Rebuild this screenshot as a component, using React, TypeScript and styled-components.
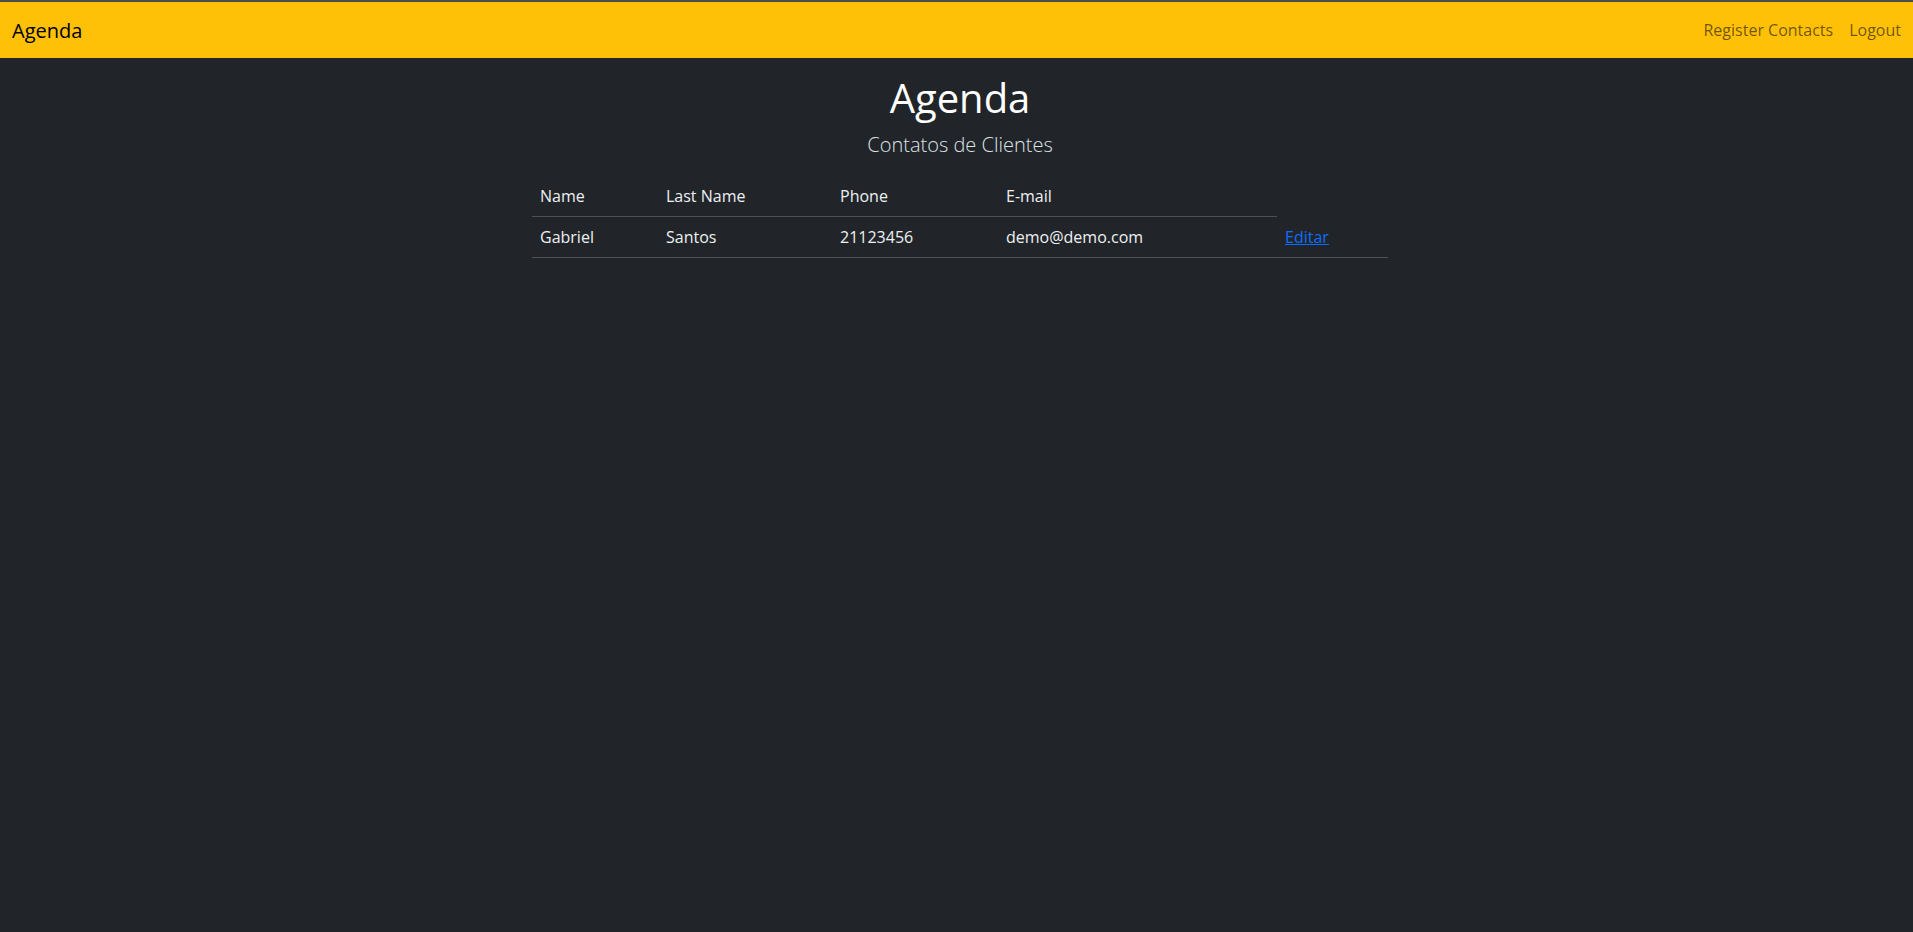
import React from "react";
import styled, { createGlobalStyle } from "styled-components";

const GlobalStyle = createGlobalStyle`
  html, body {
    margin: 0;
    padding: 0;
    background: #212529;
    font-family: "Open Sans", "Noto Sans", sans-serif;
    color: #dee2e6;
  }
  * { box-sizing: border-box; }
`;

const Page = styled.div`
  min-height: 932px;
  background: #212529;
  border-top: 2px solid #4b4b4b;
`;

const NavBar = styled.nav`
  height: 56px;
  background: #ffc107;
  display: flex;
  align-items: center;
  justify-content: space-between;
  padding: 0 12px;
`;

const Brand = styled.a`
  font-size: 20px;
  color: #000;
  text-decoration: none;
`;

const NavLinks = styled.div`
  display: flex;
  gap: 16px;
`;

const NavLink = styled.a`
  font-size: 16px;
  color: rgba(0, 0, 0, 0.58);
  text-decoration: none;
`;

const Main = styled.main`
  display: flex;
  flex-direction: column;
  align-items: center;
  padding: 16px 0 0 7px;
`;

const Title = styled.h1`
  margin: 0;
  font-size: 40px;
  font-weight: 400;
  line-height: 48px;
  color: #fff;
`;

const Subtitle = styled.h5`
  margin: 11px 0 19px;
  font-size: 20px;
  font-weight: 300;
  line-height: 24px;
  color: #dee2e6;
`;

const Table = styled.table`
  width: 856px;
  border-collapse: collapse;
  font-size: 16px;
`;

const HeadCell = styled.th<{ $w: number }>`
  width: ${(p) => p.$w}px;
  text-align: left;
  font-weight: 400;
  padding: 8px;
  line-height: 24px;
  color: #eef0f2;
  border-bottom: 1px solid #4d5154;
`;

const Cell = styled.td`
  padding: 8px;
  line-height: 24px;
  color: #eef0f2;
  border-bottom: 1px solid #4d5154;
`;

const EditLink = styled.a`
  color: #0d6efd;
  text-decoration: underline;
`;

const columns = [
  { label: "Name", w: 126 },
  { label: "Last Name", w: 174 },
  { label: "Phone", w: 166 },
  { label: "E-mail", w: 279 },
];

const contacts = [
  { name: "Gabriel", last: "Santos", phone: "21123456", email: "demo@demo.com" },
];

export default function App() {
  return (
    <Page>
      <GlobalStyle />
      <NavBar>
        <Brand href="#">Agenda</Brand>
        <NavLinks>
          <NavLink href="#">Register Contacts</NavLink>
          <NavLink href="#">Logout</NavLink>
        </NavLinks>
      </NavBar>
      <Main>
        <Title>Agenda</Title>
        <Subtitle>Contatos de Clientes</Subtitle>
        <Table>
          <thead>
            <tr>
              {columns.map((c) => (
                <HeadCell key={c.label} $w={c.w}>
                  {c.label}
                </HeadCell>
              ))}
            </tr>
          </thead>
          <tbody>
            {contacts.map((c) => (
              <tr key={c.email}>
                <Cell>{c.name}</Cell>
                <Cell>{c.last}</Cell>
                <Cell>{c.phone}</Cell>
                <Cell>{c.email}</Cell>
                <Cell>
                  <EditLink href="#">Editar</EditLink>
                </Cell>
              </tr>
            ))}
          </tbody>
        </Table>
      </Main>
    </Page>
  );
}
